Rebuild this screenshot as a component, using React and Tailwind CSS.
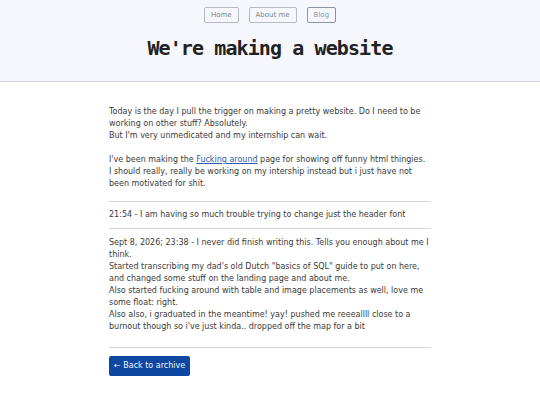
export default function App() {
  const body = { fontFamily: '"DejaVu Sans", sans-serif' };
  return (
    <div className="min-h-[405px] bg-white text-[#3a3a3a]" style={body}>
      <header className="h-[82px] bg-[#f5f7fd] border-b border-[#d3d6dc] flex flex-col items-center">
        <nav className="flex gap-[10px] pt-[7px]">
          <a className="h-[16px] px-[6px] flex items-center border border-[#b6bac2] rounded-[2px] text-[7px] text-[#858585]">Home</a>
          <a className="h-[16px] px-[6px] flex items-center border border-[#b6bac2] rounded-[2px] text-[7px] text-[#858585]">About me</a>
          <a className="h-[16px] px-[6px] flex items-center border border-[#8893a5] rounded-[2px] text-[7px] text-[#8a96a8]">Blog</a>
        </nav>
        <h1
          className="mt-[15px] text-[20px] tracking-[-0.9px] font-bold text-[#222] leading-none"
          style={{ fontFamily: '"DejaVu Sans Mono", monospace' }}
        >
          We're making a website
        </h1>
      </header>
      <main className="w-[322px] ml-[109px] pt-[24px] text-[8px] leading-[12px]">
        <p>
          Today is the day I pull the trigger on making a pretty website. Do I need to be working on other stuff? Absolutely.
          <br />
          But I'm very unmedicated and my internship can wait.
        </p>
        <p className="mt-[12px]">
          I've been making the <a className="text-[#2a5db0] underline">Fucking around</a> page for showing off funny html thingies.
          <br />
          I should really, really be working on my intership instead but i just have not been motivated for shit.
        </p>
        <hr className="mt-[11px] border-t border-[#d3d6dc]" />
        <p className="py-[7px]">21:54 - I am having so much trouble trying to change just the header font</p>
        <hr className="border-t border-[#d3d6dc]" />
        <p className="pt-[8px]">
          Sept 8, 2026; 23:38 - I never did finish writing this. Tells you enough about me I think.
          <br />
          Started transcribing my dad's old Dutch "basics of SQL" guide to put on here, and changed some stuff on the landing page and about me.
          <br />
          Also started fucking around with table and image placements as well, love me some float: right.
          <br />
          Also also, i graduated in the meantime! yay! pushed me reeeallll close to a burnout though so i've just kinda.. dropped off the map for a bit
        </p>
        <hr className="mt-[14px] border-t border-[#d3d6dc]" />
        <button className="mt-[8px] h-[20px] px-[5px] bg-[#0d47a1] text-[#eef2fa] text-[8px] rounded-[2px]">
          ← Back to archive
        </button>
      </main>
    </div>
  );
}
